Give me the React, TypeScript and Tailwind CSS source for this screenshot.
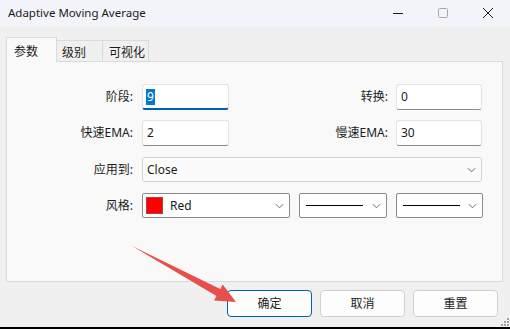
import React from "react";

const FONT = '"Noto Sans", "Noto Sans CJK SC", sans-serif';

function Chevron() {
  return (
    <svg viewBox="0 0 10 6" className="w-[9px] h-[6px] shrink-0" fill="none" stroke="#5c5c5c" strokeWidth="1">
      <path d="M1 1l4 4 4-4" />
    </svg>
  );
}

function TextInput({ value, focused, width }: { value: string; focused?: boolean; width: string }) {
  return (
    <div
      className={
        "h-[26px] flex items-center pl-[3px] bg-white rounded-[3px] border border-[#e3e3e3] " +
        width +
        (focused ? " border-b-2 border-b-[#005fb8]" : " border-b-[#8c8c8c]")
      }
    >
      {focused ? (
        <span className="bg-[#0078d4] text-white px-px leading-[16px]">{value}</span>
      ) : (
        <span className="px-px">{value}</span>
      )}
    </div>
  );
}

function LineSelect({ width }: { width: string }) {
  return (
    <div className={"h-[25px] flex items-center pl-[6px] pr-[5px] bg-white rounded-[2px] border border-[#8a8a8a] " + width}>
      <div className="w-[57px] h-px bg-black" />
      <div className="flex-1" />
      <Chevron />
    </div>
  );
}

export default function App() {
  return (
    <div
      className="relative w-[510px] h-[329px] overflow-hidden bg-[#f0f0f0] text-[12px] text-[#1b1b1b] flex flex-col"
      style={{ fontFamily: FONT }}
    >
      {/* title bar */}
      <div className="h-[27px] bg-[#f3f4f9] flex items-center shrink-0">
        <span className="pl-[8px] text-[11.5px] pb-[2px]">Adaptive Moving Average</span>
        <div className="ml-auto flex h-full">
          <div className="w-[45px] flex items-center justify-center pb-[2px]">
            <svg viewBox="0 0 10 10" className="w-[10px] h-[10px]" stroke="#1b1b1b" strokeWidth="1">
              <path d="M0 5.5h10" />
            </svg>
          </div>
          <div className="w-[45px] flex items-center justify-center pb-[2px]">
            <svg viewBox="0 0 10 10" className="w-[10px] h-[10px]" fill="none" stroke="#a8a8a8" strokeWidth="1">
              <rect x="0.5" y="0.5" width="9" height="9" rx="1" />
            </svg>
          </div>
          <div className="w-[45px] flex items-center justify-center pb-[2px]">
            <svg viewBox="0 0 10 10" className="w-[10px] h-[10px]" stroke="#1b1b1b" strokeWidth="1">
              <path d="M0 0l10 10M10 0L0 10" />
            </svg>
          </div>
        </div>
      </div>

      {/* tabs */}
      <div className="mt-[10px] ml-[6px] flex items-end h-[24px] shrink-0">
        <div className="relative z-10 w-[51px] h-[25px] -mb-px pl-[7px] pt-[5px] bg-[#f9f9f9] border-l border-t border-r border-[#dadada]">
          参数
        </div>
        <div className="w-[46px] h-[21px] pl-[5px] pt-[3px] bg-[#f0f0f0] border-t border-r border-[#dadada]">级别</div>
        <div className="w-[46px] h-[21px] pl-[6px] pt-[3px] bg-[#f0f0f0] border-t border-r border-[#dadada]">可视化</div>
      </div>

      {/* panel */}
      <div className="ml-[6px] w-[497px] h-[221px] shrink-0 bg-[#f9f9f9] border border-[#dadada] pt-[22px]">
        <div className="flex items-center h-[26px]">
          <div className="w-[135px] pr-[9px] text-right">阶段:</div>
          <TextInput value="9" focused width="w-[87px]" />
          <div className="w-[167px] pr-[8px] text-right">转换:</div>
          <TextInput value="0" width="w-[86px]" />
        </div>
        <div className="flex items-center h-[26px] mt-[10px]">
          <div className="w-[135px] pr-[9px] text-right">快速EMA:</div>
          <TextInput value="2" width="w-[87px]" />
          <div className="w-[167px] pr-[8px] text-right">慢速EMA:</div>
          <TextInput value="30" width="w-[86px]" />
        </div>
        <div className="flex items-center h-[25px] mt-[11px]">
          <div className="w-[135px] pr-[9px] text-right">应用到:</div>
          <div className="w-[340px] h-[25px] flex items-center pl-[4px] pr-[5px] bg-[#fbfbfb] rounded-[3px] border border-[#d3d3d3]">
            <span>Close</span>
            <div className="flex-1" />
            <Chevron />
          </div>
        </div>
        <div className="flex items-center h-[25px] mt-[11px] gap-[9px]">
          <div className="w-[126px] text-right">风格:</div>
          <div className="w-[148px] h-[25px] flex items-center pl-[3px] pr-[5px] bg-white rounded-[2px] border border-[#8a8a8a]">
            <div className="w-[17px] h-[17px] bg-[#ff0000] border border-[#b04040]" />
            <span className="ml-[7px]">Red</span>
            <div className="flex-1" />
            <Chevron />
          </div>
          <LineSelect width="w-[88px]" />
          <LineSelect width="w-[87px]" />
        </div>
      </div>

      {/* buttons */}
      <div className="mt-[8px] flex justify-end gap-[8px] pr-[12px] shrink-0">
        <button className="w-[85px] h-[27px] bg-[#fdfdfd] rounded-[4px] border border-[#005fb8]">确定</button>
        <button className="w-[85px] h-[27px] bg-[#fdfdfd] rounded-[4px] border border-[#d0d0d0]">取消</button>
        <button className="w-[85px] h-[27px] bg-[#fdfdfd] rounded-[4px] border border-[#d0d0d0]">重置</button>
      </div>
      <div className="flex-1" />
      <div className="h-[2px] bg-black shrink-0" />

      {/* resize grip */}
      <svg className="absolute right-[1px] bottom-[3px] w-[9px] h-[9px]" viewBox="0 0 9 9" fill="#a0a0a0">
        <rect x="7" y="1" width="2" height="2" />
        <rect x="4" y="4" width="2" height="2" />
        <rect x="7" y="4" width="2" height="2" />
        <rect x="1" y="7" width="2" height="2" />
        <rect x="4" y="7" width="2" height="2" />
        <rect x="7" y="7" width="2" height="2" />
      </svg>

      {/* annotation arrow */}
      <svg className="absolute inset-0 w-[510px] h-[329px] pointer-events-none" viewBox="0 0 510 329">
        <polygon
          points="132,246 220.3,289 222.7,284.6 236,302 214,300.4 216.5,296"
          fill="#e5504d"
        />
      </svg>
    </div>
  );
}
